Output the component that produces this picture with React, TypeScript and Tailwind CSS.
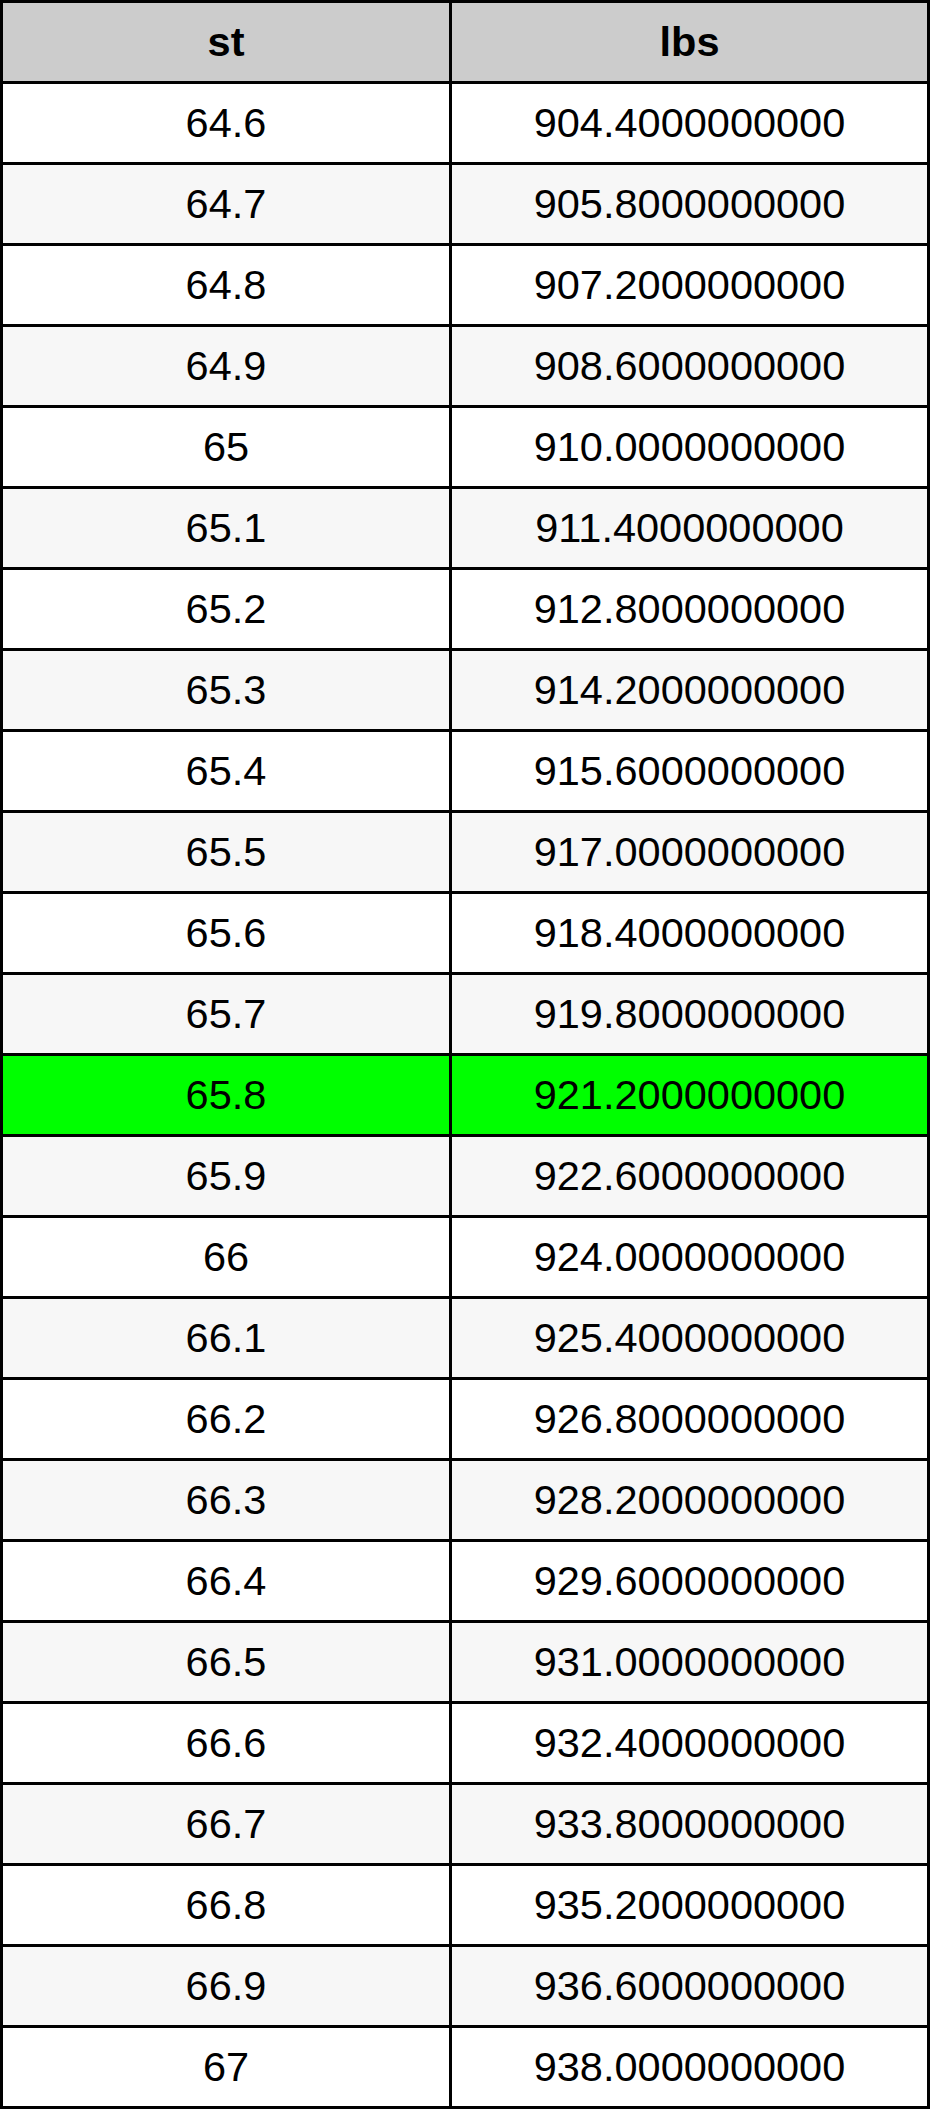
const rows = Array.from({ length: 25 }, (_, i) => {
  const tenths = 646 + i
  return {
    st: String(tenths / 10),
    lbs: ((tenths * 14) / 10).toFixed(10),
    highlight: tenths === 658,
  }
})

export default function App() {
  return (
    <div className="w-[930px] bg-white font-['Liberation_Sans',Arial,sans-serif] text-black">
      <div className="border-[3px] border-black">
        <div className="flex h-[78px] bg-[#cccccc] text-[41.5px] font-bold">
          <div className="flex w-[449px] items-center justify-center border-r-[3px] border-black">st</div>
          <div className="flex flex-1 items-center justify-center">lbs</div>
        </div>
        {rows.map((r, i) => (
          <div
            key={r.st}
            className={
              'flex h-[81px] border-t-[3px] border-black text-[41.5px] ' +
              (r.highlight ? 'bg-[#00ff00]' : i % 2 === 1 ? 'bg-[#f7f7f7]' : 'bg-white')
            }
          >
            <div className="flex w-[449px] items-center justify-center border-r-[3px] border-black">{r.st}</div>
            <div className="flex flex-1 items-center justify-center">{r.lbs}</div>
          </div>
        ))}
      </div>
    </div>
  )
}
